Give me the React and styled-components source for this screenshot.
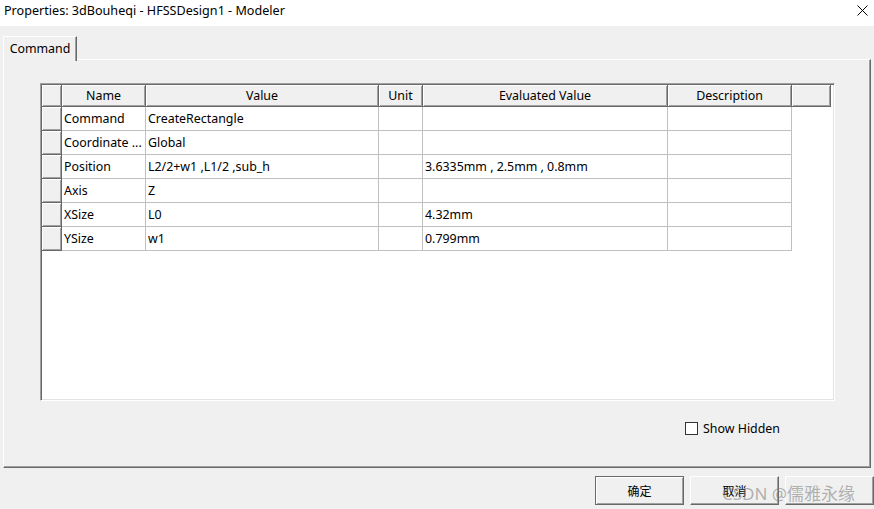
import styled, { createGlobalStyle } from 'styled-components';

const GlobalStyle = createGlobalStyle`
  html, body {
    margin: 0;
    padding: 0;
    overflow: hidden;
  }
  body {
    font-family: "Noto Sans", "Noto Sans CJK SC", sans-serif;
    font-size: 12.4px;
    color: #000;
  }
`;

const Window = styled.div`
  position: relative;
  width: 874px;
  height: 509px;
  background: #f0f0f0;
  display: flex;
  flex-direction: column;
  overflow: hidden;
`;

const TitleBar = styled.div`
  height: 26px;
  background: #fff;
  display: flex;
  align-items: flex-start;
  justify-content: space-between;
  padding: 2px 5px 0 4px;
  box-sizing: border-box;
  line-height: 17px;
  font-size: 12.6px;
`;

const CloseIcon = styled.svg`
  margin-top: 3px;
  margin-right: 1px;
`;

const Body = styled.div`
  flex: 1;
  display: flex;
  flex-direction: column;
  padding: 10px 3px 0 3px;
  min-height: 0;
`;

const TabStrip = styled.div`
  display: flex;
  height: 24px;
  position: relative;
  z-index: 1;
  margin-bottom: -1px;
`;

const Tab = styled.div`
  width: 74px;
  box-sizing: border-box;
  background: #f0f0f0;
  border-top: 1px solid #fff;
  border-left: 1px solid #fff;
  border-right: 1px solid #696969;
  box-shadow: inset -1px 0 #a0a0a0;
  display: flex;
  align-items: center;
  justify-content: center;
  padding-bottom: 2px;
  height: 25px;
`;

const Panel = styled.div`
  height: 409px;
  box-sizing: border-box;
  border-top: 1px solid #fff;
  border-left: 1px solid #fff;
  border-right: 1px solid #696969;
  border-bottom: 1px solid #696969;
  box-shadow: inset -1px -1px #a0a0a0;
  padding: 23px 35px 0 36px;
  display: flex;
  flex-direction: column;
`;

const Grid = styled.div`
  height: 318px;
  box-sizing: border-box;
  background: #fff;
  border-top: 1px solid #a0a0a0;
  border-left: 1px solid #a0a0a0;
  border-right: 1px solid #fff;
  border-bottom: 1px solid #fff;
  box-shadow: inset 1px 1px #696969, inset -1px -1px #e3e3e3;
  padding: 1px 0 0 1px;
`;

const Row = styled.div`
  display: grid;
  grid-template-columns: 20px 84px 233px 44px 245px 124px 39px;
  height: ${p => (p.$head ? '22px' : '24px')};
`;

const HeadCell = styled.div`
  box-sizing: border-box;
  background: #f0f0f0;
  border-right: 1px solid #696969;
  border-bottom: 1px solid #696969;
  box-shadow: inset 1px 1px #fff, inset -1px -1px #a0a0a0;
  display: flex;
  align-items: center;
  justify-content: center;
  padding-bottom: 1px;
  white-space: nowrap;
  overflow: hidden;
`;

const Cell = styled.div`
  box-sizing: border-box;
  border-right: 1px solid #c0c0c0;
  border-bottom: 1px solid #c0c0c0;
  display: flex;
  align-items: center;
  padding: 0 0 1px 2px;
  white-space: nowrap;
  overflow: hidden;
`;

const OptionRow = styled.label`
  display: flex;
  align-items: center;
  justify-content: flex-end;
  gap: 5px;
  margin-top: 20px;
  padding-right: 55px;
  height: 14px;
`;

const CheckBox = styled.span`
  width: 13px;
  height: 13px;
  box-sizing: border-box;
  border: 1px solid #333;
  background: #fff;
`;

const Footer = styled.div`
  display: flex;
  justify-content: flex-end;
  gap: 6px;
  padding-top: 8px;
  margin-right: -3px;
`;

const Button = styled.div`
  width: 89px;
  height: 29px;
  box-sizing: border-box;
  background: #f0f0f0;
  display: flex;
  align-items: center;
  justify-content: center;
  font-family: "Noto Sans CJK SC", sans-serif;
  font-size: 12px;
  border: 1px solid ${p => (p.$default ? '#696969' : '#fff')};
  border-right-color: #696969;
  border-bottom-color: #696969;
  box-shadow: ${p =>
    p.$default
      ? 'inset 1px 1px #fff, inset -1px -1px #a0a0a0'
      : 'inset -1px -1px #a0a0a0'};
`;

const Watermark = styled.div`
  position: absolute;
  left: 722px;
  top: 480px;
  font-family: "Noto Sans", "Noto Sans CJK SC", sans-serif;
  font-size: 17px;
  color: rgba(120, 120, 120, 0.55);
  pointer-events: none;
  white-space: nowrap;
`;

const columns = ['', 'Name', 'Value', 'Unit', 'Evaluated Value', 'Description', ''];

const rows = [
  ['Command', 'CreateRectangle', '', '', ''],
  ['Coordinate ...', 'Global', '', '', ''],
  ['Position', 'L2/2+w1 ,L1/2 ,sub_h', '', '3.6335mm , 2.5mm , 0.8mm', ''],
  ['Axis', 'Z', '', '', ''],
  ['XSize', 'L0', '', '4.32mm', ''],
  ['YSize', 'w1', '', '0.799mm', ''],
];

export default function App() {
  return (
    <>
      <GlobalStyle />
      <Window>
        <TitleBar>
          <span>Properties: 3dBouheqi - HFSSDesign1 - Modeler</span>
          <CloseIcon width="11" height="11" viewBox="0 0 11 11">
            <path d="M0.5 0.5 L10.5 10.5 M10.5 0.5 L0.5 10.5" stroke="#000" strokeWidth="1" />
          </CloseIcon>
        </TitleBar>
        <Body>
          <TabStrip>
            <Tab>Command</Tab>
          </TabStrip>
          <Panel>
            <Grid>
              <Row $head>
                {columns.map((c, i) => (
                  <HeadCell key={i}>{c}</HeadCell>
                ))}
              </Row>
              {rows.map((r, i) => (
                <Row key={i}>
                  <HeadCell />
                  {r.map((v, j) => (
                    <Cell key={j}>{v}</Cell>
                  ))}
                </Row>
              ))}
            </Grid>
            <OptionRow>
              <CheckBox />
              <span>Show Hidden</span>
            </OptionRow>
          </Panel>
          <Footer>
            <Button $default>确定</Button>
            <Button>取消</Button>
            <Button />
          </Footer>
        </Body>
        <Watermark>CSDN @儒雅永缘</Watermark>
      </Window>
    </>
  );
}
